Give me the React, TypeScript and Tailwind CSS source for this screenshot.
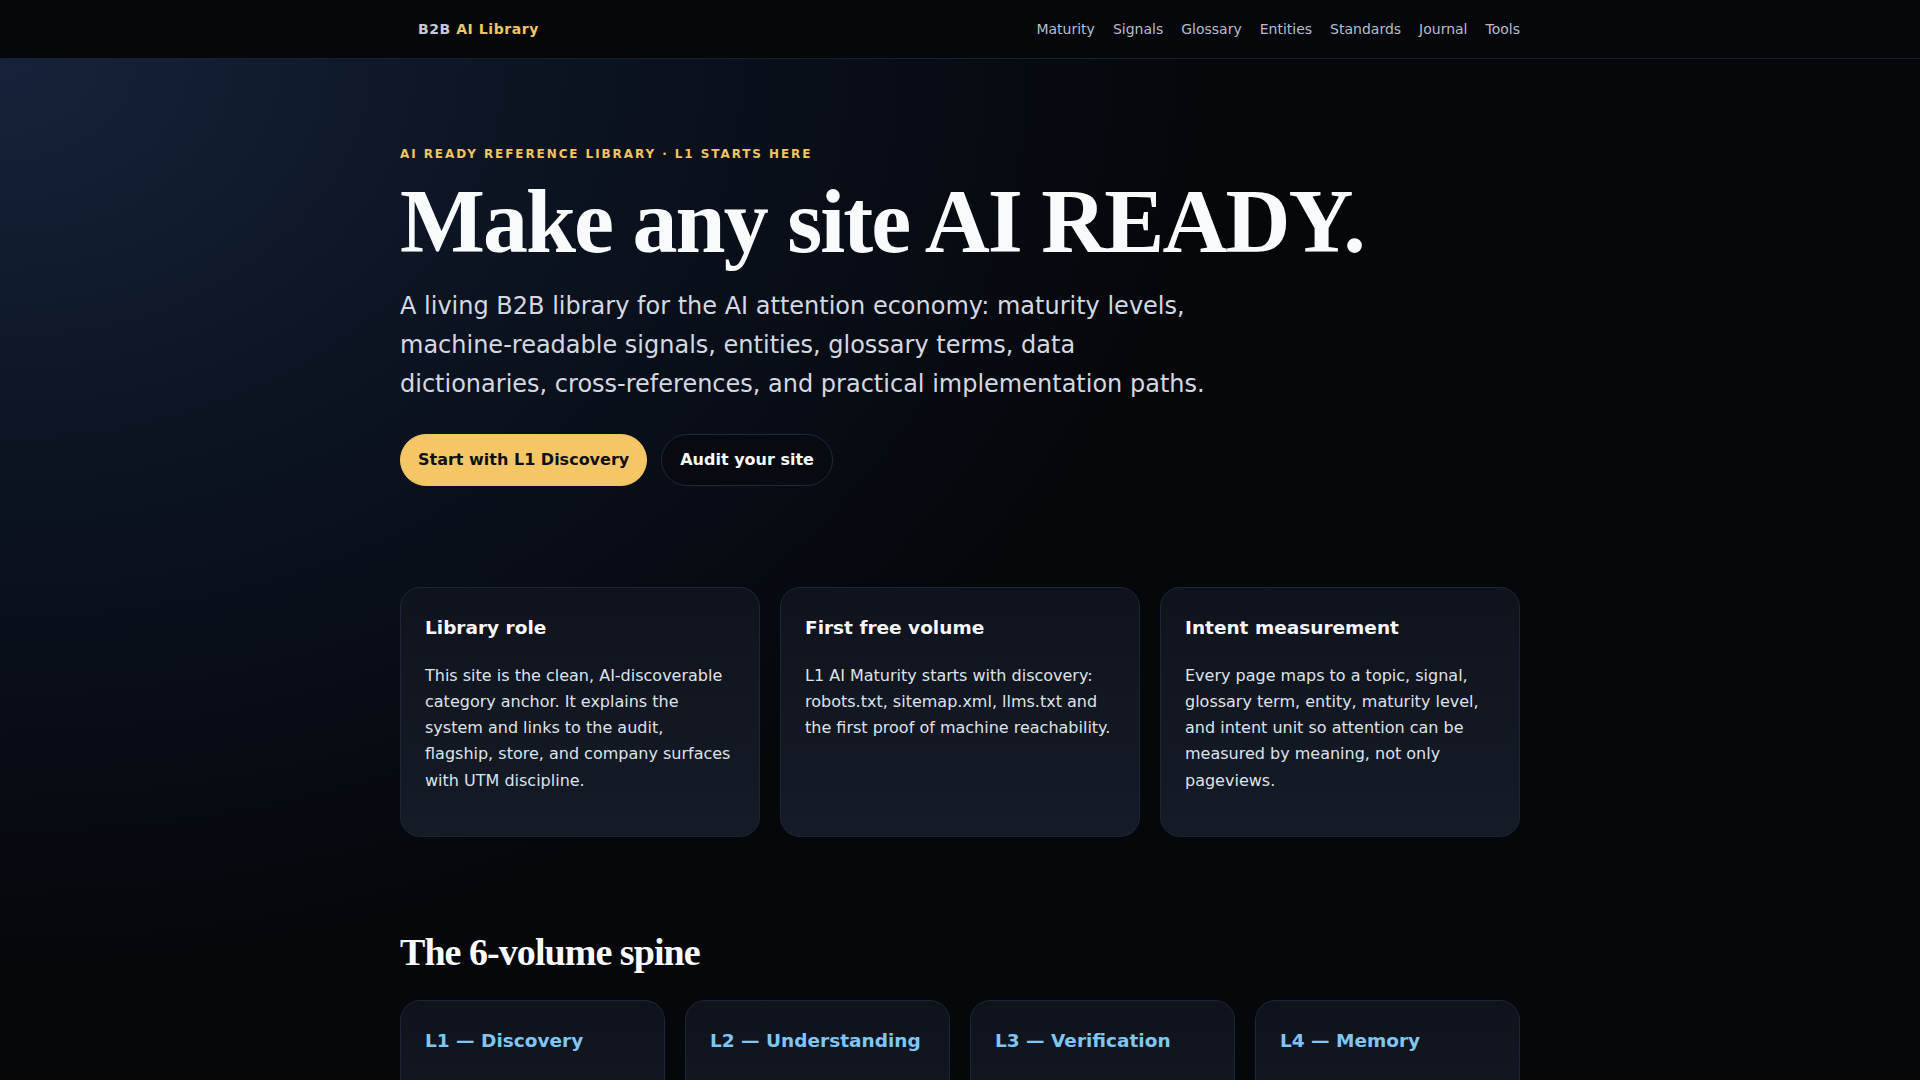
import React from "react";

const navItems = [
  "Maturity",
  "Signals",
  "Glossary",
  "Entities",
  "Standards",
  "Journal",
  "Tools",
];

const roleCards = [
  {
    title: "Library role",
    body: "This site is the clean, AI-discoverable category anchor. It explains the system and links to the audit, flagship, store, and company surfaces with UTM discipline.",
  },
  {
    title: "First free volume",
    body: "L1 AI Maturity starts with discovery: robots.txt, sitemap.xml, llms.txt and the first proof of machine reachability.",
  },
  {
    title: "Intent measurement",
    body: "Every page maps to a topic, signal, glossary term, entity, maturity level, and intent unit so attention can be measured by meaning, not only pageviews.",
  },
];

const volumes = [
  {
    title: "L1 — Discovery",
    body: "Can machines find you? Crawl access, sitemaps, llms.txt and reachability checks.",
  },
  {
    title: "L2 — Understanding",
    body: "Can machines read you? Structured data, entities and clean semantic markup.",
  },
  {
    title: "L3 — Verification",
    body: "Can machines trust you? Sources, citations, authorship and consistent facts.",
  },
  {
    title: "L4 — Memory",
    body: "Do machines remember you? Stable identifiers, glossary terms and cross-references.",
  },
  {
    title: "L5 — Recommendation",
    body: "Do machines suggest you? Comparisons, use cases and answer-ready content.",
  },
  {
    title: "L6 — Action",
    body: "Can machines act on you? Feeds, APIs, forms and measurable intent units.",
  },
];

const Card = ({
  title,
  body,
  accent,
}: {
  title: string;
  body: string;
  accent?: boolean;
}) => (
  <div className="rounded-[20px] border border-[#1c2638] bg-gradient-to-b from-[#0f131c] to-[#151b27] px-6 pt-[25.5px] pb-[42px]">
    <h3
      className={
        accent
          ? "text-[18.5px] font-bold leading-7 text-[#7fc6f5] mb-[21px]"
          : "text-[18.5px] font-bold leading-7 text-[#f5f7fa] mb-[21px]"
      }
    >
      {title}
    </h3>
    <p className="text-[16px] leading-[26.25px] text-[#dde3ea]">{body}</p>
  </div>
);

const App = () => {
  return (
    <div className="min-h-screen bg-[#05070b] font-['DejaVu_Sans',sans-serif] text-[#f5f7fa]">
      {/* Header */}
      <header className="h-[59px] border-b border-[#162032] bg-[#05070b]">
        <div className="mx-auto flex h-full w-[1120px] items-center justify-between">
          <a className="pl-[18px] text-[14px] font-bold tracking-[0.04em]">
            <span className="text-[#c3cad4]">B2B</span>{" "}
            <span className="text-[#f2c462]">AI Library</span>
          </a>
          <nav className="flex items-center gap-[18px] text-[14px] text-[#b6bfcc]">
            {navItems.map((item) => (
              <a key={item}>{item}</a>
            ))}
          </nav>
        </div>
      </header>

      <main className="bg-[radial-gradient(1200px_900px_at_0%_0%,#15233a_0%,#0c1422_45%,#05070b_100%)] pb-24">
        {/* Hero */}
        <section className="mx-auto w-[1120px] pt-[87px]">
          <p className="text-[12px] font-bold uppercase leading-4 tracking-[0.16em] text-[#f2c462]">
            AI Ready Reference Library · L1 Starts Here
          </p>
          <h1 className="mt-[15px] font-['Liberation_Serif',serif] text-[90px] font-bold leading-none tracking-[-0.022em] text-[#f8fafc]">
            Make any site AI READY.
          </h1>
          <p className="mt-[20px] max-w-[820px] text-[24px] leading-[39px] text-[#d3d9e2]">
            A living B2B library for the AI attention economy: maturity levels,
            machine-readable signals, entities, glossary terms, data
            dictionaries, cross-references, and practical implementation paths.
          </p>
          <div className="mt-[30px] flex gap-[14px]">
            <a className="rounded-full border border-[#f4c666] bg-[#f4c666] px-[17px] py-[13px] text-[16px] font-bold leading-6 text-[#0d1117]">
              Start with L1 Discovery
            </a>
            <a className="rounded-full border border-[#1f2939] bg-[#070a10] px-[18px] py-[13px] text-[16px] font-bold leading-6 text-[#f8fafc]">
              Audit your site
            </a>
          </div>
        </section>

        {/* Role cards */}
        <section className="mx-auto mt-[101px] grid w-[1120px] grid-cols-3 gap-5">
          {roleCards.map((c) => (
            <Card key={c.title} title={c.title} body={c.body} />
          ))}
        </section>

        {/* Volumes */}
        <section className="mx-auto mt-[93px] w-[1120px]">
          <h2 className="mb-[25px] font-['Liberation_Serif',serif] text-[38px] font-bold leading-[1.2] tracking-[-0.025em] text-[#f8fafc]">
            The 6-volume spine
          </h2>
          <div className="grid grid-cols-4 gap-5">
            {volumes.map((v) => (
              <Card key={v.title} title={v.title} body={v.body} accent />
            ))}
          </div>
        </section>
      </main>
    </div>
  );
};

export default App;
